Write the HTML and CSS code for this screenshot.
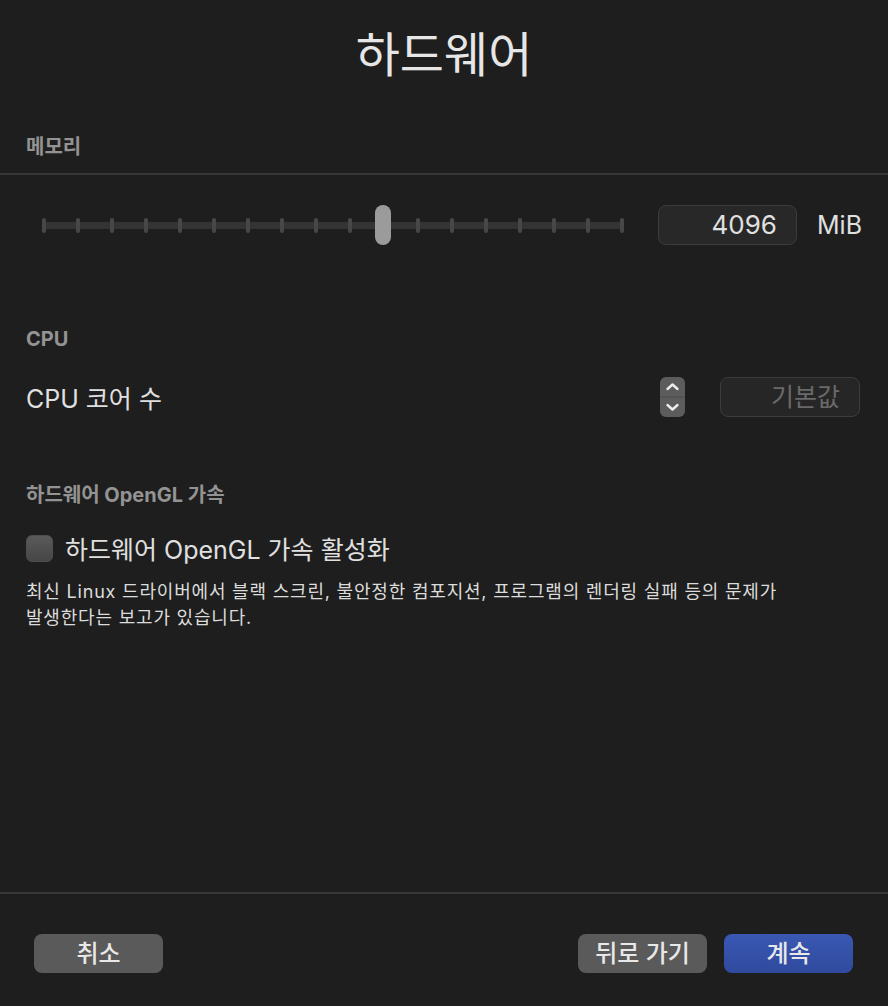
FILE: index.html
```html
<!DOCTYPE html>
<html lang="ko">
<head>
<meta charset="utf-8">
<title>하드웨어</title>
<link rel="stylesheet" href="styles.css">
</head>
<body>
<div class="window">
  <h1 class="title">하드웨어</h1>

  <div class="section-head head-memory">메모리</div>
  <div class="divider"></div>

  <div class="memory-row">
    <div class="slider">
      <div class="track">
        <span class="tick"></span><span class="tick"></span><span class="tick"></span><span class="tick"></span><span class="tick"></span><span class="tick"></span><span class="tick"></span><span class="tick"></span><span class="tick"></span><span class="tick"></span><span class="tick"></span><span class="tick"></span><span class="tick"></span><span class="tick"></span><span class="tick"></span><span class="tick"></span><span class="tick"></span><span class="tick"></span>
      </div>
      <div class="thumb"></div>
    </div>
    <div class="field value-field">4096</div>
    <div class="unit">MiB</div>
  </div>

  <div class="section-head head-cpu">CPU</div>
  <div class="cpu-row">
    <div class="row-label">CPU 코어 수</div>
    <div class="stepper">
      <svg width="25" height="40" viewBox="0 0 25 40">
        <line x1="0" y1="20" x2="25" y2="20" stroke="#4a4a4a" stroke-width="1"/>
        <polyline points="7.5,12 12.5,7.5 17.5,12" fill="none" stroke="#ececec" stroke-width="2.4" stroke-linecap="round" stroke-linejoin="round"/>
        <polyline points="7.5,28 12.5,32.5 17.5,28" fill="none" stroke="#ececec" stroke-width="2.4" stroke-linecap="round" stroke-linejoin="round"/>
      </svg>
    </div>
    <div class="field placeholder-field">기본값</div>
  </div>

  <div class="section-head head-gl">하드웨어 OpenGL 가속</div>
  <label class="check-row">
    <span class="checkbox"></span>
    <span class="check-label">하드웨어 OpenGL 가속 활성화</span>
  </label>
  <p class="desc">최신 Linux 드라이버에서 블랙 스크린, 불안정한 컴포지션, 프로그램의 렌더링 실패 등의 문제가<br>발생한다는 보고가 있습니다.</p>

  <div class="spacer"></div>
  <div class="divider"></div>
  <div class="buttons">
    <button class="btn">취소</button>
    <div class="btn-group">
      <button class="btn">뒤로 가기</button>
      <button class="btn btn-primary">계속</button>
    </div>
  </div>
</div>
</body>
</html>
```

FILE: styles.css
```css
html, body {
  margin: 0;
  padding: 0;
  background: #1e1e1e;
}

body {
  font-family: "Inter", "Noto Sans CJK KR", sans-serif;
  color: #dfdfdf;
}

.window {
  width: 888px;
  height: 1006px;
  display: flex;
  flex-direction: column;
  box-sizing: border-box;
}

.title {
  margin: 28px 0 0;
  font-size: 48px;
  line-height: 54px;
  font-weight: 400;
  text-align: center;
  color: #e6e6e6;
}

.section-head {
  padding: 0 26px;
  font-size: 20px;
  line-height: 22px;
  font-weight: 700;
  color: #939393;
}

.head-memory { margin-top: 54px; }
.head-cpu { margin-top: 83px; }
.head-gl { margin-top: 67px; }

.divider {
  height: 2px;
  background: #373737;
}

.head-memory + .divider { margin-top: 15px; }

.memory-row {
  margin-top: 30px;
  height: 40px;
  display: flex;
  align-items: center;
  padding-left: 42px;
}

.slider {
  position: relative;
  width: 582px;
  height: 40px;
  display: flex;
  align-items: center;
}

.track {
  width: 100%;
  height: 7px;
  background: #343434;
  display: flex;
  justify-content: space-between;
  align-items: center;
}

.tick {
  width: 4px;
  height: 15px;
  border-radius: 2px;
  background: #474747;
  flex: none;
}

.thumb {
  position: absolute;
  left: 333px;
  top: 0;
  width: 16px;
  height: 40px;
  border-radius: 8px;
  background: #9b9b9b;
}

.field {
  box-sizing: border-box;
  height: 40px;
  border-radius: 8px;
  border: 1px solid #3c3c3c;
  background: #282828;
  text-align: right;
  font-size: 26px;
  line-height: 38px;
}

.value-field {
  width: 139px;
  margin-left: 34px;
  padding-right: 19px;
  color: #e0e0e0;
}

.unit {
  margin-left: 20px;
  font-size: 25px;
  color: #e0e0e0;
}

.cpu-row {
  margin-top: 27px;
  height: 40px;
  display: flex;
  align-items: center;
  padding: 0 28px 0 26px;
}

.row-label {
  flex: 1;
  font-size: 25px;
  color: #e0e0e0;
}

.stepper {
  width: 25px;
  height: 40px;
  border-radius: 6px;
  background: #5c5c5c;
  overflow: hidden;
  display: flex;
}

.placeholder-field {
  width: 140px;
  margin-left: 35px;
  padding-right: 19px;
  background: #262626;
  color: #6a6a6a;
  font-size: 25px;
}

.check-row {
  margin-top: 28px;
  height: 28px;
  display: flex;
  align-items: center;
  padding-left: 26px;
}

.checkbox {
  box-sizing: border-box;
  width: 27px;
  height: 27px;
  border-radius: 6px;
  background: linear-gradient(#5a5a5a, #464646);
  border: 1px solid #4e4e4e;
}

.check-label {
  margin-left: 12px;
  font-size: 25px;
  color: #e0e0e0;
}

.desc {
  margin: 17px 0 0;
  padding: 0 26px;
  font-size: 18px;
  letter-spacing: 0.8px;
  line-height: 26px;
  color: #dcdcdc;
}

.spacer { flex: 1; }

.buttons {
  height: 112px;
  box-sizing: border-box;
  padding: 40px 35px 0 34px;
  display: flex;
  justify-content: space-between;
  align-items: flex-start;
}

.btn-group {
  display: flex;
  gap: 17px;
}

.btn {
  width: 129px;
  height: 39px;
  border: none;
  border-radius: 8px;
  background: #5a5a5a;
  color: #e8e8e8;
  font-family: "Inter", "Noto Sans CJK KR", sans-serif;
  font-size: 24px;
  font-weight: 500;
  line-height: 39px;
  padding: 0;
}

.btn-primary {
  background: linear-gradient(#3a58b3, #2f4a9e);
}
```
